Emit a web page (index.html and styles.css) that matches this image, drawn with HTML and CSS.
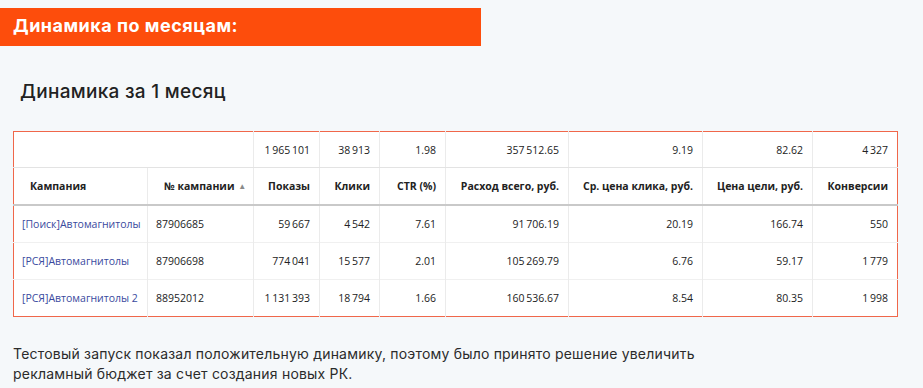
FILE: index.html
```html
<!DOCTYPE html>
<html lang="ru">
<head>
<meta charset="utf-8">
<link rel="stylesheet" href="styles.css">
</head>
<body>
<div class="banner">Динамика по месяцам:</div>
<h2 class="subtitle">Динамика за 1 месяц</h2>
<table class="stats">
  <colgroup>
    <col class="c1"><col class="c2"><col class="c3"><col class="c4"><col class="c5"><col class="c6"><col class="c7"><col class="c8"><col class="c9">
  </colgroup>
  <tr class="totals">
    <td colspan="2"></td>
    <td class="num">1&thinsp;965&thinsp;101</td>
    <td class="num">38&thinsp;913</td>
    <td class="num">1.98</td>
    <td class="num">357&thinsp;512.65</td>
    <td class="num">9.19</td>
    <td class="num">82.62</td>
    <td class="num">4&thinsp;327</td>
  </tr>
  <tr class="head">
    <th class="left">Кампания</th>
    <th class="left">№ кампании <span class="sort">▲</span></th>
    <th class="num">Показы</th>
    <th class="num">Клики</th>
    <th class="num">CTR (%)</th>
    <th class="num">Расход всего, руб.</th>
    <th class="num">Ср. цена клика, руб.</th>
    <th class="num">Цена цели, руб.</th>
    <th class="num">Конверсии</th>
  </tr>
  <tr>
    <td><a class="camp">[Поиск]Автомагнитолы</a></td>
    <td>87906685</td>
    <td class="num">59&thinsp;667</td>
    <td class="num">4&thinsp;542</td>
    <td class="num">7.61</td>
    <td class="num">91&thinsp;706.19</td>
    <td class="num">20.19</td>
    <td class="num">166.74</td>
    <td class="num">550</td>
  </tr>
  <tr>
    <td><a class="camp">[РСЯ]Автомагнитолы</a></td>
    <td>87906698</td>
    <td class="num">774&thinsp;041</td>
    <td class="num">15&thinsp;577</td>
    <td class="num">2.01</td>
    <td class="num">105&thinsp;269.79</td>
    <td class="num">6.76</td>
    <td class="num">59.17</td>
    <td class="num">1&thinsp;779</td>
  </tr>
  <tr>
    <td><a class="camp">[РСЯ]Автомагнитолы 2</a></td>
    <td>88952012</td>
    <td class="num">1&thinsp;131&thinsp;393</td>
    <td class="num">18&thinsp;794</td>
    <td class="num">1.66</td>
    <td class="num">160&thinsp;536.67</td>
    <td class="num">8.54</td>
    <td class="num">80.35</td>
    <td class="num">1&thinsp;998</td>
  </tr>
</table>
<p class="text">Тестовый запуск показал положительную динамику, поэтому было принято решение увеличить рекламный бюджет за счет создания новых РК.</p>
</body>
</html>
```
FILE: styles.css
```css
html, body {
  margin: 0;
  padding: 0;
  background: #f5f8fa;
  font-family: Inter, "Open Sans", sans-serif;
  color: #2b2b2b;
}
body {
  padding-top: 8px;
}
.banner {
  width: 481px;
  height: 38px;
  box-sizing: border-box;
  background: #fd4d0c;
  color: #fff;
  font-weight: 700;
  font-size: 18px;
  letter-spacing: 0.5px;
  line-height: 36px;
  padding-left: 13px;
}
.subtitle {
  margin: 33px 0 0 20px;
  font-size: 19px;
  font-weight: 500;
  letter-spacing: 0.3px;
  line-height: 26px;
  color: #222;
}
.stats {
  margin: 26px 0 0 13px;
  width: 884px;
  table-layout: fixed;
  border-collapse: collapse;
  background: #fff;
  border: 1px solid #f0674a;
  font-family: "Open Sans", sans-serif;
  font-size: 10.5px;
  color: #222;
}
.c1 { width: 134px; }
.c2 { width: 106px; }
.c3 { width: 66px; }
.c4 { width: 60px; }
.c5 { width: 66px; }
.c6 { width: 123px; }
.c7 { width: 134px; }
.c8 { width: 110px; }
.c9 { width: 85px; }
.stats td, .stats th {
  border-left: 1px solid #ebebeb;
  border-top: 1px solid #f0f0f0;
  padding: 0 9px 0 8px;
  height: 36px;
  white-space: nowrap;
  overflow: hidden;
}
.stats td:first-child, .stats th:first-child {
  border-left: none;
}
.stats tr.totals td {
  height: 35px;
  border-top: none;
  border-bottom: 1px solid #e3e3e3;
}
.stats th {
  font-weight: 700;
  height: 36px;
  border-bottom: 2px solid #c9c9c9;
  border-top: none;
}
.stats th.left {
  text-align: left;
  padding-left: 16px;
}
.num {
  text-align: right;
}
.sort {
  color: #8a8a8a;
  font-size: 8px;
  vertical-align: 1px;
  margin-left: 1px;
}
.camp {
  color: #3a4a9e;
  text-decoration: none;
}
.text {
  margin: 27px 0 0 13px;
  width: 720px;
  font-size: 14px;
  letter-spacing: 0.2px;
  line-height: 20px;
  color: #2b2b2b;
}
```
